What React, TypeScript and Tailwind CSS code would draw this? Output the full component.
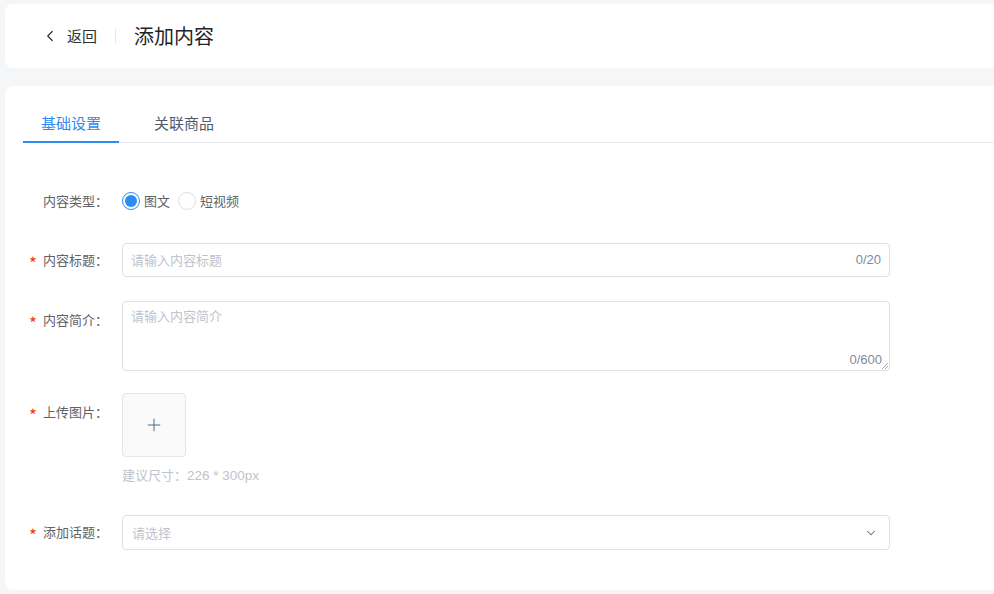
import { ChevronLeft, ChevronDown, Plus } from "lucide-react";

const font = { fontFamily: '"Noto Sans CJK SC", "Noto Sans", sans-serif' };
const num = { fontFamily: '"Liberation Sans", "Noto Sans CJK SC", sans-serif' };

function Label({ text, required, tall }: { text: string; required?: boolean; tall?: boolean }) {
  return (
    <div
      className={
        tall
          ? "w-[117px] shrink-0 pr-[14px] flex justify-end items-center h-[38px] text-[13px] text-[#606266]"
          : "w-[117px] shrink-0 pr-[14px] flex justify-end items-center h-[34px] text-[13px] text-[#606266]"
      }
    >
      {required && <span className="text-[#ed4014] mr-[6px] text-[17px] leading-none pt-[4px]">*</span>}
      <span>{text}：</span>
    </div>
  );
}

export default function App() {
  return (
    <div className="w-full h-[594px] bg-[#f5f6f8] pl-[5px] pt-[4px] overflow-hidden" style={font}>
      {/* header */}
      <div className="h-[64px] bg-white rounded-l-lg flex items-center pl-[36px]">
        <button className="flex items-center text-[15px] text-[#303133]">
          <ChevronLeft size={18} strokeWidth={1.6} className="text-[#303133]" />
          <span className="ml-[8px]">返回</span>
        </button>
        <div className="w-px h-[16px] bg-[#e4e7ed] mx-[18px]" />
        <h1 className="text-[20px] text-[#1f2329]">添加内容</h1>
      </div>

      {/* content */}
      <div className="mt-[18px] h-[504px] bg-white rounded-l-lg pt-[18px]">
        <div className="ml-[18px] flex border-b border-[#e4e7ed] text-[15px]">
          <div className="relative px-[18px] pt-[8px] pb-[8px] leading-[22px] text-[#2d8cf0]">
            基础设置
            <span className="absolute left-0 right-0 bottom-[-1px] h-[2px] bg-[#2d8cf0]" />
          </div>
          <div className="ml-[17px] px-[18px] pt-[8px] pb-[8px] leading-[22px] text-[#515a6e]">关联商品</div>
        </div>

        <div className="mt-[41px]">
          {/* 内容类型 */}
          <div className="flex">
            <Label text="内容类型" />
            <div className="flex items-center h-[34px] text-[13px] text-[#606266]">
              <span className="w-[18px] h-[18px] rounded-full border border-[#2d8cf0] flex items-center justify-center">
                <span className="w-[12px] h-[12px] rounded-full bg-[#2d8cf0]" />
              </span>
              <span className="ml-[4px]">图文</span>
              <span className="ml-[8px] w-[18px] h-[18px] rounded-full border border-[#dcdfe6]" />
              <span className="ml-[4px]">短视频</span>
            </div>
          </div>

          {/* 内容标题 */}
          <div className="flex mt-[25px]">
            <Label text="内容标题" required />
            <div className="w-[768px] h-[34px] border border-[#dcdfe6] rounded-[4px] flex items-center justify-between px-[8px] text-[13px]">
              <span className="text-[#c0c4cc]">请输入内容标题</span>
              <span className="text-[#7f8ba0] text-[13px]" style={num}>0/20</span>
            </div>
          </div>

          {/* 内容简介 */}
          <div className="flex mt-[24px]">
            <Label text="内容简介" required tall />
            <div className="relative w-[768px] h-[70px] border border-[#dcdfe6] rounded-[4px] px-[8px] pt-[4px] text-[13px]">
              <span className="text-[#c0c4cc]">请输入内容简介</span>
              <span className="absolute right-[7px] bottom-[1px] text-[#7f8ba0] text-[13px]" style={num}>0/600</span>
              <svg className="absolute right-[1px] bottom-[1px]" width="6" height="6" viewBox="0 0 6 6">
                <path d="M6 0L0 6M6 3L3 6" stroke="#909399" strokeWidth="0.8" />
              </svg>
            </div>
          </div>

          {/* 上传图片 */}
          <div className="flex mt-[22px]">
            <Label text="上传图片" required tall />
            <div>
              <div className="w-[64px] h-[64px] bg-[#fafafa] border border-[#e5e6eb] rounded-[4px] flex items-center justify-center">
                <Plus size={20} strokeWidth={1.2} className="text-[#4e6b8c]" />
              </div>
              <div className="mt-[8px] text-[13px] leading-[20px] text-[#c0c4cc]">
                建议尺寸：<span className="text-[13.5px]" style={num}>226 * 300px</span>
              </div>
            </div>
          </div>

          {/* 添加话题 */}
          <div className="flex mt-[29px]">
            <Label text="添加话题" required />
            <div className="w-[768px] h-[35px] border border-[#dcdfe6] rounded-[4px] flex items-center justify-between pl-[9px] pr-[11px] text-[13px]">
              <span className="text-[#c0c4cc]">请选择</span>
              <ChevronDown size={14} strokeWidth={1.8} className="text-[#606f86]" />
            </div>
          </div>
        </div>
      </div>
    </div>
  );
}
